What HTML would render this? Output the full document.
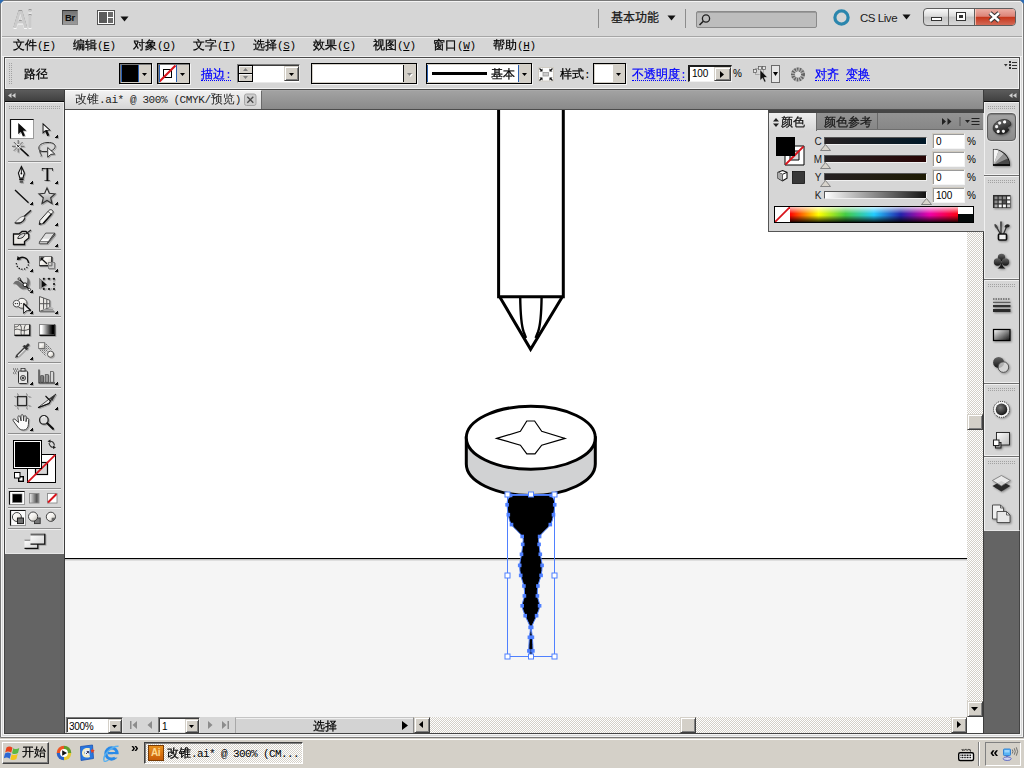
<!DOCTYPE html>
<html lang="zh"><head><meta charset="utf-8"><title>Illustrator</title>
<style>
html,body{margin:0;padding:0}
body{width:1024px;height:768px;overflow:hidden;position:relative;background:#d6d6d6;font-family:"Liberation Sans","WenQuanYi Zen Hei",sans-serif;font-size:12px;color:#000;line-height:14px;-webkit-text-stroke:0.25px}
div,span,svg{position:absolute;box-sizing:border-box}
span.t{white-space:nowrap}
.n{-webkit-text-stroke:0}
.m{position:static;-webkit-text-stroke:0;font-family:"Liberation Mono",monospace;font-size:11px;letter-spacing:-0.4px}
.lnk{color:#0000ff;border-bottom:1px dotted #0000ff}
.sep{left:8px;width:53px;height:2px;border-top:1px solid #8e8e8e;border-bottom:1px solid #f0f0f0}
.rsep{left:984px;width:35px;height:2px;border-top:1px solid #6e6e6e;border-bottom:1px solid #f0f0f0;box-shadow:0 -1px 0 #f0f0f0}
.grip{height:3px;background:repeating-conic-gradient(#a2a2a2 0 25%,transparent 0 100%) 0 0/2px 2px}
.xpbtn{background:#d4d0c8;border:1px solid;border-color:#d4d0c8 #404040 #404040 #d4d0c8;box-shadow:inset 1px 1px 0 #fff,inset -1px -1px 0 #808080}
.xpbtn2{background:#d4d0c8;border:1px solid;border-color:#fff #404040 #404040 #fff;box-shadow:inset -1px -1px 0 #808080}
.fld{background:#fff;border:1px solid;border-color:#7a7a7a #e8e8e8 #e8e8e8 #7a7a7a;box-shadow:inset 1px 1px 0 #3c3c3c}
</style></head><body>
<!-- WINDOW FRAME -->
<div id="frame" style="left:0;top:0;width:1024px;height:738px;background:#d7d7d7"></div>
<!-- APPBAR -->
<div id="appbar" style="left:0;top:0;width:1024px;height:37px;background:#d6d6d6;border-bottom:1px solid #a6a6a6">
<span class="t n" style="left:13px;top:6px;font:bold 23px/28px 'Liberation Sans',sans-serif;color:#cbcbcb;text-shadow:0 1px 0 #f8f8f8,0 -1px 0 #9a9a9a;letter-spacing:-0.5px;transform:scaleX(.88);transform-origin:0 0">Ai</span>
<div style="left:62px;top:10px;width:16px;height:15px;background:linear-gradient(#747474,#9a9a9a);border:1px solid #8a8a8a;border-top-color:#2e2e2e;border-left-color:#4a4a4a"></div>
<span class="t n" style="left:65px;top:12px;font:bold 9.500px/12px 'Liberation Sans',sans-serif;color:#0c0c0c;letter-spacing:-0.3px">Br</span>
<svg style="left:97px;top:10px" width="18" height="15" viewBox="0 0 18 15"><rect x="0.5" y="0.5" width="17" height="14" fill="#fff" stroke="#555"/><rect x="2" y="2" width="8" height="11" fill="#5a5a5a"/><rect x="11" y="2" width="5" height="5" fill="#6a6a6a"/><rect x="11" y="8" width="5" height="5" fill="#6a6a6a"/></svg>
<svg style="left:120px;top:16px" width="9" height="6"><path d="M0.5 0.5h8l-4 5z" fill="#111"/></svg>
<div style="left:598px;top:9px;width:1px;height:19px;background:#8c8c8c"></div>
<span class="t" style="left:611px;top:11px;font:12px/15px 'Liberation Sans','Noto Sans CJK SC',sans-serif;color:#1a1a1a">基本功能</span>
<svg style="left:667px;top:15px" width="9" height="6"><path d="M0.5 0.5h8l-4 5z" fill="#111"/></svg>
<div style="left:685px;top:9px;width:1px;height:19px;background:#8c8c8c"></div>
<div style="left:696px;top:11px;width:121px;height:17px;background:#bdbdbd;border:1px solid #8a8a8a;border-radius:2px;box-shadow:inset 0 1px 0 #9a9a9a"></div>
<svg style="left:698px;top:13px" width="14" height="14" viewBox="0 0 14 14"><circle cx="8" cy="5.5" r="3.6" fill="none" stroke="#222" stroke-width="1.3"/><path d="M5.3 8.2L1.5 12" stroke="#222" stroke-width="1.6"/></svg>
<svg style="left:832px;top:8px" width="19" height="19" viewBox="0 0 19 19"><circle cx="9.5" cy="9.5" r="6.6" fill="none" stroke="#2b86ad" stroke-width="3.2"/></svg>
<span class="t n" style="left:860px;top:11px;font:11.500px/15px 'Liberation Sans',sans-serif;color:#1a1a1a;letter-spacing:-0.45px">CS Live</span>
<svg style="left:902px;top:14px" width="9" height="6"><path d="M0.5 0.5h8l-4 5z" fill="#111"/></svg>
<div style="left:923px;top:8px;width:93px;height:18px;border:1px solid #5e5e5e;border-radius:4px;background:linear-gradient(#fafafa,#dcdcdc 45%,#c4c4c4 50%,#d8d8d8);overflow:hidden">
<div style="left:50px;top:-1px;width:43px;height:18px;background:linear-gradient(#eeb4aa,#dd8478 46%,#c6371c 52%,#d4705e);border-left:1px solid #5e5e5e;box-shadow:inset 0 0 0 1px rgba(255,220,205,.7)"></div>
<div style="left:24px;top:-1px;width:1px;height:18px;background:#6a6a6a"></div>
<svg style="left:0;top:-1px" width="93" height="18" viewBox="0 0 93 18"><rect x="7.5" y="9.5" width="10" height="3" fill="#fff" stroke="#333"/><rect x="32.5" y="4.500" width="9" height="8" fill="#fff" stroke="#333"/><rect x="35" y="7" width="4" height="3" fill="#333"/><path d="M66 5l9 8M75 5l-9 8" stroke="#333" stroke-width="4.4"/><path d="M66 5l9 8M75 5l-9 8" stroke="#fff" stroke-width="2.4"/></svg>
</div>
</div>
<!-- MENUBAR -->
<div id="menubar" style="left:0;top:37px;width:1024px;height:20px;background:#d6d6d6;border-top:1px solid #ececec;border-bottom:1px solid #f0f0f0">
<span class="t" style="left:13px;top:0px">文件<span class="m">(<u>F</u>)</span></span>
<span class="t" style="left:73px;top:0px">编辑<span class="m">(<u>E</u>)</span></span>
<span class="t" style="left:133px;top:0px">对象<span class="m">(<u>O</u>)</span></span>
<span class="t" style="left:193px;top:0px">文字<span class="m">(<u>T</u>)</span></span>
<span class="t" style="left:253px;top:0px">选择<span class="m">(<u>S</u>)</span></span>
<span class="t" style="left:313px;top:0px">效果<span class="m">(<u>C</u>)</span></span>
<span class="t" style="left:373px;top:0px">视图<span class="m">(<u>V</u>)</span></span>
<span class="t" style="left:433px;top:0px">窗口<span class="m">(<u>W</u>)</span></span>
<span class="t" style="left:493px;top:0px">帮助<span class="m">(<u>H</u>)</span></span>
</div>
<!-- CONTROLBAR -->
<div id="ctrlbar" style="left:4px;top:57px;width:1016px;height:33px;background:#d6d6d6;border:1px solid #4a4a4a;box-shadow:inset 0 0 0 1px #f0f0f0"></div>
<div id="ctrl" style="left:0;top:0;width:0;height:0">
<div class="grip" style="left:8px;top:63px;width:4px;height:21px"></div>
<span class="t" style="left:24px;top:67px">路径</span>
<!-- fill dd -->
<div style="left:119px;top:63px;width:33px;height:21px;background:#d4d0c8;border:1px solid #000;box-shadow:inset 1px 1px 0 #7a7a7a,1px 1px 0 #f4f4f4"></div>
<div style="left:121px;top:65px;width:18px;height:17px;background:#000;border-left:1px solid #2a5fb0;border-right:1px solid #2a5fb0"></div>
<svg style="left:142px;top:73px" width="5" height="3"><path d="M0 0h5l-2.500 3z" fill="#000"/></svg>
<!-- stroke dd -->
<div style="left:157px;top:63px;width:33px;height:21px;background:#d4d0c8;border:1px solid #000;box-shadow:inset 1px 1px 0 #7a7a7a,1px 1px 0 #f4f4f4"></div>
<svg style="left:159px;top:65px" width="18" height="17" viewBox="0 0 18 17"><rect width="18" height="17" fill="#fff"/><rect x="4.500" y="4.500" width="8" height="8" fill="none" stroke="#000" stroke-width="1"/><path d="M.5 16.500L16.500 .5" stroke="#d8141c" stroke-width="2.100"/><path d="M.5 0v17M17.500 0v17" stroke="#2a5fb0"/></svg>
<svg style="left:180px;top:73px" width="5" height="3"><path d="M0 0h5l-2.500 3z" fill="#000"/></svg>
<span class="t lnk" style="left:201px;top:67px;height:14px">描边<span class="m">:</span></span>
<!-- stepper -->
<div class="fld" style="left:237px;top:64px;width:63px;height:19px"></div>
<div style="left:238px;top:65px;width:15px;height:9px;background:#d4d0c8;border:1px solid #000;box-shadow:inset 1px 1px 0 #f4f4f4"></div>
<div style="left:238px;top:73px;width:15px;height:9px;background:#d4d0c8;border:1px solid #000;box-shadow:inset 1px 1px 0 #f4f4f4"></div>
<svg style="left:243px;top:68px" width="5" height="11"><path d="M0 3h5l-2.500-3zM0 8h5l-2.500 3z" fill="#808080"/></svg>
<div class="xpbtn" style="left:284px;top:66px;width:15px;height:15px"></div>
<svg style="left:289px;top:73px" width="5" height="3"><path d="M0 0h5l-2.500 3z" fill="#000"/></svg>
<!-- big dd -->
<div style="left:311px;top:63px;width:106px;height:21px;background:#fff;border:1px solid #000;box-shadow:inset 0 0 0 1px #d4d0c8,1px 1px 0 #f4f4f4"></div>
<div style="left:403px;top:65px;width:13px;height:17px;background:#d4d0c8;border-left:1px solid #111"></div>
<svg style="left:407px;top:73px" width="7" height="5"><path d="M1 1h5l-2.500 3z" fill="#fff"/><path d="M0 0h5l-2.500 3z" fill="#808080"/></svg>
<!-- stroke style dd -->
<div style="left:426px;top:63px;width:106px;height:21px;background:#fff;border:1px solid #000;box-shadow:inset 0 0 0 1px #d4d0c8,1px 1px 0 #f4f4f4"></div>
<div style="left:432px;top:72px;width:55px;height:3px;background:#000"></div>
<span class="t" style="left:491px;top:67px">基本</span>
<div style="left:518px;top:65px;width:1px;height:17px;background:#2a5fb0"></div><div style="left:427px;top:65px;width:1px;height:17px;background:#2a5fb0"></div>
<div style="left:519px;top:65px;width:12px;height:17px;background:#d4d0c8"></div>
<svg style="left:522px;top:73px" width="5" height="3"><path d="M0 0h5l-2.500 3z" fill="#000"/></svg>
<svg style="left:538px;top:67px" width="16" height="15" viewBox="0 0 16 15"><rect x=".5" y=".5" width="15" height="13.500" fill="#fbfbfb" stroke="#d0ccc4"/><rect x="5" y="5.500" width="5.500" height="3.500" fill="#ccc" stroke="#999" stroke-width=".8"/><g fill="#111"><path d="M4.500 4.500v-3l-3 3zM11.500 4.500v-3l3 3zM4.500 10.500v3l-3-3zM11.500 10.500v3l3-3z"/></g><path d="M1.500 1.500l2 2M14.500 1.500l-2 2M1.500 13.500l2-2M14.500 13.500l-2-2" stroke="#111" stroke-width="1.100"/></svg>
<span class="t" style="left:560px;top:67px">样式<span class="m">:</span></span>
<div style="left:593px;top:63px;width:33px;height:21px;background:#fff;border:1px solid #000;box-shadow:inset 0 0 0 1px #d4d0c8,1px 1px 0 #f4f4f4"></div>
<div style="left:613px;top:65px;width:12px;height:17px;background:#d4d0c8"></div>
<svg style="left:616px;top:73px" width="5" height="3"><path d="M0 0h5l-2.500 3z" fill="#000"/></svg>
<span class="t lnk" style="left:632px;top:67px;height:14px">不透明度<span class="m">:</span></span>
<div style="left:688px;top:65px;width:44px;height:17px;background:#fff;border:2px solid #1e1e1e;border-right:1px solid #f0f0f0;border-bottom:1px solid #f0f0f0"></div>
<span class="t n" style="left:692px;top:67px;font:10px/13px 'Liberation Sans',sans-serif;letter-spacing:-0.2px">100</span>
<div class="xpbtn" style="left:714px;top:67px;width:17px;height:14px"></div>
<svg style="left:720px;top:71px" width="4" height="7"><path d="M0 0v7l4-3.500z" fill="#000"/></svg>
<span class="t n" style="left:733px;top:67px;font:10px/14px 'Liberation Sans',sans-serif">%</span>
<svg style="left:752px;top:65px" width="18" height="18" viewBox="0 0 18 18"><rect x="3.500" y="3.500" width="8" height="6" fill="none" stroke="#666" stroke-width=".8" stroke-dasharray="1 1"/><rect x="1.500" y="4.500" width="3" height="3" fill="#e4e4e4" stroke="#555" stroke-width=".7"/><rect x="6.500" y="1.500" width="3" height="3" fill="#e4e4e4" stroke="#555" stroke-width=".7"/><rect x="10.500" y="1.500" width="3" height="3" fill="#e4e4e4" stroke="#555" stroke-width=".7"/><path d="M8 4.500v11l2.500-2.300 1.900 4 1.700-.8-1.900-3.900h3.400z" fill="#111" stroke="#e8e8e8" stroke-width=".6"/></svg>
<div style="left:771px;top:65px;width:9px;height:18px;background:#e6e6e6;border:1px solid #6a6a6a"></div>
<svg style="left:773px;top:72px" width="5" height="4"><path d="M0 0h5l-2.500 4z" fill="#000"/></svg>
<svg style="left:789px;top:65px" width="18" height="18" viewBox="0 0 18 18"><circle cx="9" cy="9.500" r="4.900" fill="none" stroke="#646464" stroke-width="4.200" stroke-dasharray="1.500 .9"/><circle cx="9" cy="9.500" r="4.900" fill="none" stroke="#a4a4a4" stroke-width="4.200" stroke-dasharray=".9 1.500" stroke-dashoffset=".9"/><circle cx="9" cy="9.500" r="2.900" fill="#dedede"/></svg>
<span class="t lnk" style="left:815px;top:67px;height:14px">对齐</span>
<span class="t lnk" style="left:846px;top:67px;height:14px">变换</span>
<svg style="left:1004px;top:61px" width="14" height="8" viewBox="0 0 14 8"><path d="M0 3h3.600l-1.800 2.600z" fill="#333"/><path d="M5 0h2v2h-2zM5 3h2v2h-2zM5 6h2v2h-2zM8 1h5v1h-5zM8 4h5v1h-5zM8 7h5v1h-5z" fill="#333"/></svg>
</div>
<!-- DOC AREA -->
<div id="doc" style="left:4px;top:90px;width:1016px;height:644px;background:#646464;border:1px solid #444;border-top:none"></div>
<div style="left:3px;top:57px;width:1018px;height:678px;border:1px solid #f4f4f4;border-top:none"></div>
<div id="tabbar" style="left:65px;top:90px;width:919px;height:20px;background:linear-gradient(#a2a2a2,#8a8a8a);border-top:1px solid #a8a8a8;border-bottom:1px solid #4c4c4c"></div>
<div id="tab" style="left:65px;top:90px;width:197px;height:19px;background:linear-gradient(#f2f2f2,#d6d6d6);border-right:1px solid #6a6a6a;border-top:1px solid #fcfcfc"></div>
<span class="t n" style="left:75px;top:92px;color:#1e1e1e">改锥<span class="m">.ai* @ 300% (CMYK/</span>预览<span class="m">)</span></span>
<svg style="left:244px;top:93px" width="13" height="13" viewBox="0 0 13 13"><rect x=".5" y="1" width="11.500" height="11.500" rx="2" fill="#cecece" stroke="#a6a6a6"/><path d="M3.300 3.800l6 6M9.300 3.800l-6 6" stroke="#4a4a4a" stroke-width="1.300"/></svg>
<svg id="art" style="left:65px;top:110px" width="902" height="607" viewBox="65 110 902 607">
<rect x="65" y="110" width="902" height="448" fill="#fff"/>
<rect x="65" y="558" width="902" height="159" fill="#f5f5f5"/>
<rect x="65" y="558" width="902" height="1" fill="#000"/><rect x="65" y="559" width="902" height="1" fill="#c2c2c2"/><rect x="65" y="560" width="902" height="1" fill="#dedede"/>
<g fill="none" stroke="#000" stroke-width="3" stroke-linejoin="miter" stroke-miterlimit="10">
<path d="M498.600 108V296.700H563.300V108"/>
<path d="M499.800 297L530.600 349.300L562.200 297"/>
<path d="M520.200 297C520.400 312 521.200 325 523.700 332L526 338M541.600 297C541.400 312 540.600 325 538 332L535.600 338" stroke-width="2.400"/>
</g>
<path d="M466.300 437.750V464A64.500 31.450 0 0 0 595.300 464V437.750Z" fill="#d1d2d3" stroke="#000" stroke-width="3"/>
<ellipse cx="530.800" cy="437.750" rx="64.500" ry="31.450" fill="#fff" stroke="#000" stroke-width="3"/>
<path d="M496.700 438.400L520.400 431.300L526.800 421H534.600L541.700 431.300L565 438.400L541.700 445.200L535 453.800H526.800L520.400 445.200Z" fill="#fff" stroke="#000" stroke-width="1.200"/>
<path d="M510.6 495.4C510.1 496.1 508.5 497.9 507.9 499.5C507.3 501.1 507.0 502.3 507.1 504.8C507.2 507.3 507.6 511.4 508.3 514.7C509.0 518.0 509.2 521.0 511.5 524.6C513.8 528.2 520.3 533.2 522.2 536.5C524.1 539.8 522.8 541.4 522.7 544.4C522.6 547.4 522.0 550.8 521.5 554.3C521.0 557.8 519.8 561.9 519.7 565.4C519.6 568.9 520.0 572.0 520.7 575.4C521.4 578.8 523.3 582.6 523.9 586.0C524.5 589.4 524.7 592.6 524.4 595.9C524.1 599.2 522.1 602.5 522.2 605.8C522.3 609.1 523.9 612.1 525.2 615.7C526.5 619.3 529.4 623.8 530.1 627.4C530.8 631.0 529.6 633.4 529.4 637.3C529.2 641.2 528.6 647.7 528.9 650.9C529.1 654.1 530.6 655.4 530.9 656.3L530.9 656.3C531.2 655.4 532.6 654.1 532.9 650.9C533.1 647.7 532.6 641.2 532.4 637.3C532.2 633.4 531.0 631.0 531.7 627.4C532.4 623.8 535.3 619.3 536.6 615.7C537.9 612.1 539.5 609.1 539.6 605.8C539.7 602.5 537.7 599.2 537.4 595.9C537.1 592.6 537.3 589.4 537.9 586.0C538.5 582.6 540.4 578.8 541.1 575.4C541.8 572.0 542.2 568.9 542.1 565.4C542.0 561.9 540.8 557.8 540.3 554.3C539.8 550.8 539.2 547.4 539.1 544.4C539.0 541.4 537.7 539.8 539.6 536.5C541.5 533.2 548.0 528.2 550.3 524.6C552.6 521.0 552.8 518.0 553.5 514.7C554.2 511.4 554.6 507.3 554.7 504.8C554.8 502.3 554.5 501.1 553.9 499.5C553.3 497.9 551.6 496.1 551.2 495.4Z" fill="#000" stroke="#4f80ff" stroke-width="1"/>
<g fill="#4f80ff"><rect x="508.8" y="493.6" width="3.600" height="3.600"/><rect x="549.4" y="493.6" width="3.600" height="3.600"/><rect x="505.3" y="503.0" width="3.600" height="3.600"/><rect x="552.9" y="503.0" width="3.600" height="3.600"/><rect x="506.5" y="512.9" width="3.600" height="3.600"/><rect x="551.7" y="512.9" width="3.600" height="3.600"/><rect x="509.7" y="522.8" width="3.600" height="3.600"/><rect x="548.5" y="522.8" width="3.600" height="3.600"/><rect x="520.4" y="534.7" width="3.600" height="3.600"/><rect x="537.8" y="534.7" width="3.600" height="3.600"/><rect x="520.9" y="542.6" width="3.600" height="3.600"/><rect x="537.3" y="542.6" width="3.600" height="3.600"/><rect x="519.7" y="552.5" width="3.600" height="3.600"/><rect x="538.5" y="552.5" width="3.600" height="3.600"/><rect x="517.9" y="563.6" width="3.600" height="3.600"/><rect x="540.3" y="563.6" width="3.600" height="3.600"/><rect x="518.9" y="573.6" width="3.600" height="3.600"/><rect x="539.3" y="573.6" width="3.600" height="3.600"/><rect x="522.1" y="584.2" width="3.600" height="3.600"/><rect x="536.1" y="584.2" width="3.600" height="3.600"/><rect x="522.6" y="594.1" width="3.600" height="3.600"/><rect x="535.6" y="594.1" width="3.600" height="3.600"/><rect x="520.4" y="604.0" width="3.600" height="3.600"/><rect x="537.8" y="604.0" width="3.600" height="3.600"/><rect x="523.4" y="613.9" width="3.600" height="3.600"/><rect x="534.8" y="613.9" width="3.600" height="3.600"/><rect x="528.3" y="625.6" width="3.600" height="3.600"/><rect x="529.9" y="625.6" width="3.600" height="3.600"/><rect x="527.6" y="635.5" width="3.600" height="3.600"/><rect x="530.6" y="635.5" width="3.600" height="3.600"/><rect x="527.1" y="649.1" width="3.600" height="3.600"/><rect x="531.1" y="649.1" width="3.600" height="3.600"/><rect x="529.1" y="654.5" width="3.600" height="3.600"/></g>
<rect x="507.500" y="494.500" width="47" height="162" fill="none" stroke="#4f80ff" stroke-width="1"/>
<g fill="#fff" stroke="#4f80ff" stroke-width="1"><rect x="505.0" y="492.0" width="5" height="5"/><rect x="505.0" y="573.0" width="5" height="5"/><rect x="505.0" y="654.0" width="5" height="5"/><rect x="528.5" y="492.0" width="5" height="5"/><rect x="528.5" y="654.0" width="5" height="5"/><rect x="552.0" y="492.0" width="5" height="5"/><rect x="552.0" y="573.0" width="5" height="5"/><rect x="552.0" y="654.0" width="5" height="5"/></g>
</svg>
<!-- SCROLLBARS/STATUS -->
<div id="vscroll" style="left:967px;top:110px;width:16px;height:607px;background:repeating-conic-gradient(#fff 0 25%,#d4d0c8 0 50%) 0 0/2px 2px"></div>
<div class="xpbtn" style="left:967px;top:414px;width:16px;height:16px"></div>
<div class="xpbtn" style="left:967px;top:701px;width:16px;height:16px"></div>
<svg style="left:971px;top:707px" width="7" height="4"><path d="M0 0h7l-3.500 4z" fill="#000"/></svg>
<div id="statusbar" style="left:65px;top:717px;width:919px;height:16px;background:#d6d6d6"></div>
<div id="hscroll" style="left:414px;top:717px;width:553px;height:16px;background:repeating-conic-gradient(#fff 0 25%,#d4d0c8 0 50%) 0 0/2px 2px"></div>
<div style="left:967px;top:717px;width:16px;height:16px;background:#fff"></div>
<div class="fld" style="left:66px;top:717px;width:57px;height:16px"></div>
<span class="t n" style="left:69px;top:720px;font:10px/14px 'Liberation Sans',sans-serif;letter-spacing:-0.3px">300%</span>
<div class="xpbtn" style="left:108px;top:719px;width:14px;height:14px"></div>
<svg style="left:112px;top:725px" width="5" height="3"><path d="M0 0h5l-2.500 3z" fill="#000"/></svg>
<svg style="left:128px;top:720px" width="110" height="11" viewBox="0 0 110 11"><g fill="#8c8c8c"><rect x="2" y="1" width="1.500" height="8"/><path d="M9 1v8l-4.500-4z"/><path d="M24 1v8l-4.500-4z"/><path d="M80 1v8l4.500-4z"/><path d="M94 1v8l4.500-4z"/><rect x="99.500" y="1" width="1.500" height="8"/></g></svg>
<div class="fld" style="left:158px;top:717px;width:42px;height:16px"></div>
<span class="t n" style="left:162px;top:720px;font:10px/14px 'Liberation Sans',sans-serif">1</span>
<div class="xpbtn" style="left:185px;top:719px;width:14px;height:14px"></div>
<svg style="left:189px;top:725px" width="5" height="3"><path d="M0 0h5l-2.500 3z" fill="#000"/></svg>
<div style="left:235px;top:717px;width:179px;height:16px;background:#d3d3d3;border-top:1px solid #c4c4c4;border-left:1px solid #a8a8a8;border-right:1px solid #8a8a8a;box-shadow:inset 0 1px 0 #f0f0f0"></div>
<span class="t" style="left:313px;top:719px">选择</span>
<svg style="left:402px;top:721px" width="6" height="9"><path d="M0 0v9l6-4.500z" fill="#000"/></svg>
<div class="xpbtn" style="left:414px;top:717px;width:16px;height:16px"></div>
<svg style="left:419px;top:721px" width="4" height="7"><path d="M4 0v7l-4-3.500z" fill="#000"/></svg>
<div class="xpbtn" style="left:680px;top:717px;width:16px;height:16px"></div>
<div class="xpbtn" style="left:951px;top:717px;width:16px;height:16px"></div>
<svg style="left:957px;top:721px" width="4" height="7"><path d="M0 0v7l4-3.500z" fill="#000"/></svg>
<!-- TOOLS -->
<div id="tools" style="left:5px;top:90px;width:59px;height:464px;background:#d6d6d6;border-right:1px solid #e8e8e8;border-bottom:1px solid #e8e8e8;border-left:1px solid #f0f0f0"></div>
<div style="left:5px;top:102px;width:59px;height:1px;background:#f0f0f0"></div>
<div style="left:64px;top:90px;width:1px;height:644px;background:#3c3c3c"></div>
<div style="left:5px;top:90px;width:59px;height:12px;background:linear-gradient(#5c5c5c,#404040);border-bottom:1px solid #0c0c0c"></div>
<svg style="left:8px;top:93px" width="8" height="5"><path d="M3.500 0v5l-3.500-2.500zM7.500 0v5l-3.500-2.500z" fill="#d0d0d0"/></svg>
<div class="grip" style="left:8px;top:106px;width:53px"></div>
<div class="sep" style="top:161px"></div><div class="sep" style="top:249px"></div><div class="sep" style="top:316px"></div><div class="sep" style="top:362px"></div><div class="sep" style="top:387px"></div><div class="sep" style="top:433px"></div><div class="sep" style="top:488px"></div><div class="sep" style="top:507px"></div><div class="sep" style="top:528px"></div>
<svg id="toolicons" style="left:0;top:110px" width="66" height="446" viewBox="0 110 66 446"><defs><linearGradient id="gm" x1="0" y1="0" x2="0" y2="1"><stop offset="0" stop-color="#fafafa"/><stop offset="1" stop-color="#9a9a9a"/></linearGradient>
<linearGradient id="gh" x1="0" y1="0" x2="1" y2="0"><stop offset="0" stop-color="#fff"/><stop offset="1" stop-color="#000"/></linearGradient>
<linearGradient id="gm2" x1="0" y1="0" x2="1" y2="1"><stop offset="0" stop-color="#fff"/><stop offset="1" stop-color="#d4d4d4"/></linearGradient>
<linearGradient id="gb" x1="0" y1="0" x2="1" y2="0"><stop offset="0" stop-color="#f0f0f0"/><stop offset=".75" stop-color="#555"/><stop offset="1" stop-color="#888"/></linearGradient>
<linearGradient id="gh2" x1="0" y1="0" x2="1" y2="0"><stop offset=".15" stop-color="#fff"/><stop offset=".85" stop-color="#000"/></linearGradient>
<linearGradient id="gd" x1="0" y1="0" x2="1" y2="1"><stop offset="0" stop-color="#fff"/><stop offset=".5" stop-color="#f4f2ee"/><stop offset="1" stop-color="#b8b4ac"/></linearGradient>
<filter id="sh" x="-20%" y="-20%" width="150%" height="150%"><feGaussianBlur in="SourceAlpha" stdDeviation=".6"/><feOffset dx=".8" dy="1"/><feComponentTransfer><feFuncA type="linear" slope=".22"/></feComponentTransfer><feMerge><feMergeNode/><feMergeNode in="SourceGraphic"/></feMerge></filter></defs>
<rect x="10.500" y="119.500" width="23" height="19" fill="#fff" stroke="#9a9a9a"/><path d="M10.500 138.500v-19h23" fill="none" stroke="#111" stroke-width="1.200"/>
<g filter="url(#sh)">
<path d="M18.200 123v11.200l2.600-2.500 2.100 4.700 2.100-1-2.100-4.600h3.600z" fill="#111"/>
<path d="M42.600 122.800v11.200l2.600-2.500 2.100 4.700 2.100-1-2.100-4.600h3.600z" fill="#111"/><path d="M43.500 125v6.800l1.700-1.600 1.300-.1h2.500z" fill="#f2f2f2"/>
<path d="M57 135h1v1h-1zM56 136h2v1h-2zM55 137h3v1h-3z" fill="#0a0a0a"/>
<path d="M18.200 140v12.500M12 146.300h12.500M13.800 142l8.800 8.800M22.600 142l-8.800 8.800" stroke="#555" stroke-width=".9"/><circle cx="18.200" cy="146.300" r="2.300" fill="#f4f4f4"/><path d="M17 145l2.500 2.500M19.500 145l-2.500 2.500" stroke="#111" stroke-width=".9"/><path d="M20.500 148.500l8 7.500" stroke="#111" stroke-width="1.700"/>
<path d="M40 151c-3-4 0-8 7-8.500s10 3 7 6.500c-1 1-2 1.500-3 1.500M40 151c0 2 2 1 1.500 0s-2-.5-1.500 1.500 2 2 1 4" fill="none" stroke="#333" stroke-width="1"/><path d="M42 151.500h5" stroke="#333"/><path d="M47.700 147.500l7 6.500-4 .4-3 2.800z" fill="#f4f4f4" stroke="#222" stroke-width=".9"/>
</g>
<g filter="url(#sh)">
<path d="M21.400 166.500l3 6.500-1.400 5h-3.200l-1.400-5z" fill="#f4f4f4" stroke="#111" stroke-width="1.100"/><path d="M21.400 167v6" stroke="#111" stroke-width=".9"/><circle cx="21.400" cy="173.500" r=".9" fill="#111"/><rect x="19.200" y="178.500" width="4.400" height="1.600" fill="#111"/><rect x="19.700" y="180.500" width="3.400" height="2.300" fill="#555"/>
<path d="M32 181h1v1h-1zM31 182h2v1h-2zM30 183h3v1h-3z" fill="#0a0a0a"/>
<text x="47.300" y="181" text-anchor="middle" font-family="Liberation Serif,serif" font-size="19" fill="#111">T</text>
<path d="M57 181h1v1h-1zM56 182h2v1h-2zM55 183h3v1h-3z" fill="#0a0a0a"/>
<path d="M15 190l13.500 12.700" stroke="#111" stroke-width="1.300"/><path d="M32 202h1v1h-1zM31 203h2v1h-2zM30 204h3v1h-3z" fill="#0a0a0a"/>
<path d="M47 188l2.300 5.300 5.700.600-4.300 3.900 1.300 5.700-5-3-5 3 1.300-5.700-4.300-3.900 5.700-.6z" fill="url(#gm)" stroke="#333" stroke-width="1.200"/><path d="M57 202h1v1h-1zM56 203h2v1h-2zM55 204h3v1h-3z" fill="#0a0a0a"/>
<path d="M30.300 209.600L23.400 215.900" stroke="#e4e4e4" stroke-width="1.200"/><path d="M31 210.300L24 216.600" stroke="#222" stroke-width="1.500"/><path d="M24.300 216.200C20.500 216.300 18 219.300 14.800 222.800C19.500 223.800 23.500 222 24.800 218.200Z" fill="#ececec" stroke="#444" stroke-width=".7"/><path d="M14.800 222.800C19.500 223.800 23.500 222 24.800 218.200" fill="none" stroke="#222" stroke-width="1.300"/>
<path d="M39.200 224.600L39.900 220.500L48.500 210.800C50 209 52.500 209.500 53 211.500C53.200 212.500 52.500 213 51.800 213.700L43.200 223.500Z" fill="#f2f2f0" stroke="#222" stroke-width=".9"/><path d="M43.200 223.500L51.800 213.700" stroke="#111" stroke-width="1.500"/><path d="M39.200 224.600l.4-2.300 1.700 1.500z" fill="#111"/><path d="M48 211.400l3.300 2.900" stroke="#555" stroke-width=".9"/><path d="M57 223h1v1h-1zM56 224h2v1h-2zM55 225h3v1h-3z" fill="#0a0a0a"/>
<path d="M13.500 234h5.500l3-2.500h4l2.800 3v3.500l-4.300 3.500v3h-11z" fill="#ebe9e5" stroke="#111" stroke-width="1.300"/><path d="M31 230l-5.500 4" stroke="#222" stroke-width="1.300"/><path d="M17.800 238.500c0-2.500 4-5.500 7-5 .5 2.500-3 5.500-7 5z" fill="#d8d8d8" stroke="#222" stroke-width="1"/>
<path d="M45.700 233.100h9.100l-6.600 8.700h-8.700z" fill="#dedede" stroke="#333" stroke-width=".8"/><path d="M43 238.800h7.400l-2.200 3h-8.700z" fill="#fbfbfb"/><path d="M39.500 241.800h8.700l-.8 1.900h-8.200z" fill="#f4f4f4" stroke="#333" stroke-width=".8"/><path d="M54.800 233.100v1.900l-7.400 8.700.8-1.900z" fill="#999" stroke="#333" stroke-width=".8"/><path d="M57 244h1v1h-1zM56 245h2v1h-2zM55 246h3v1h-3z" fill="#0a0a0a"/>
</g>
<g filter="url(#sh)">
<g fill="#111"><circle cx="28.5" cy="262.4" r=".75"/><circle cx="28.3" cy="265.1" r=".75"/><circle cx="26.9" cy="267.4" r=".75"/><circle cx="24.6" cy="268.9" r=".75"/><circle cx="21.9" cy="269.3" r=".75"/><circle cx="19.3" cy="268.4" r=".75"/><circle cx="17.3" cy="266.4" r=".75"/><circle cx="16.4" cy="263.8" r=".75"/></g><path d="M18.300 259A6.100 6.100 0 0 1 28.500 262.300" fill="none" stroke="#111" stroke-width="1.300"/><path d="M16.800 260.300l.8-4.300 3.400 3.200z" fill="#111"/><path d="M32 269h1v1h-1zM31 270h2v1h-2zM30 271h3v1h-3z" fill="#0a0a0a"/>
<rect x="39.500" y="256.500" width="12" height="9" fill="url(#gd)" stroke="#6e6e6e" stroke-width="1"/><path d="M39.500 265.800h12.500v-9" fill="none" stroke="#111" stroke-width="1"/><rect x="48.500" y="262.500" width="6" height="6" fill="#d6d6d6" fill-opacity=".5" stroke="#858585" stroke-width="1"/><path d="M47 263.700l-5.500-5" stroke="#111" stroke-width="1.200"/><path d="M40.300 257.300h4.300l-4.300 4.100z" fill="#111"/><path d="M57 269h1v1h-1zM56 270h2v1h-2zM55 271h3v1h-3z" fill="#0a0a0a"/>
<path d="M13 284.500c1-4 4.500-5 7-2.500s4.500 3.500 6.200 1.500 1.300-4.500.3-6.300c3.500 1 4.200 5.500 2.500 8.800s-6.500 4.700-9.500 1.500-4.500-5-6.500-3z" fill="#6e6e6e"/><path d="M19.200 279l10.100 10.500" stroke="#111" stroke-width="1.100"/><circle cx="19.200" cy="279" r="1.200" fill="#fff" stroke="#111" stroke-width=".8"/><circle cx="25" cy="284.800" r="1.900" fill="#fff" stroke="#111" stroke-width=".9"/><circle cx="29.300" cy="289.500" r="1.200" fill="#fff" stroke="#111" stroke-width=".8"/><path d="M32 290h1v1h-1zM31 291h2v1h-2zM30 292h3v1h-3z" fill="#0a0a0a"/>
<rect x="43.800" y="278.800" width="10.200" height="10.200" fill="none" stroke="#555" stroke-width=".7" stroke-dasharray=".8 .8"/><g fill="#111"><rect x="42.9" y="277.9" width="1.800" height="1.800"/><rect x="42.9" y="288.1" width="1.800" height="1.800"/><rect x="48.1" y="277.9" width="1.800" height="1.800"/><rect x="48.1" y="288.1" width="1.800" height="1.800"/><rect x="53.1" y="277.9" width="1.800" height="1.800"/><rect x="53.1" y="283.1" width="1.800" height="1.800"/><rect x="53.1" y="288.1" width="1.800" height="1.800"/></g><path d="M39.200 278v10.700l7.600-3.900z" fill="#111"/><path d="M39.200 278v10.700l2.500-1.300v-6.900z" fill="#9a9a9a"/>
<circle cx="22" cy="303.300" r="5" fill="url(#gd)" stroke="#555" stroke-width="1"/><circle cx="16.500" cy="303.600" r="3.300" fill="#f4f4f4" stroke="#555" stroke-width="1"/><path d="M17.500 300.700a3.300 3.300 0 0 1 0 5.800" fill="#ececec" stroke="none"/><g fill="#222"><circle cx="15.400" cy="303.600" r=".7"/><circle cx="17.400" cy="303.600" r=".7"/><circle cx="19.700" cy="303.600" r=".5"/><circle cx="21.300" cy="303.600" r=".5"/></g><path d="M23.600 303.600v9.800l2.400-2.300 1.300-.5h3.400z" fill="#f0f0f0" stroke="#111" stroke-width=".9" stroke-linejoin="round"/><path d="M23.600 303.600l7.100 7" stroke="#111" stroke-width="1.400"/><path d="M32 311h1v1h-1zM31 312h2v1h-2zM30 313h3v1h-3z" fill="#0a0a0a"/>
<path d="M39.500 296.500l10.300 3.800v7.100l-10.300 4.100z" fill="#eceae6" stroke="#555" stroke-width="1"/><path d="M43.600 298v12M46.800 299.200v9.500M39.500 303.700h10.300" stroke="#555" stroke-width="1"/><path d="M39.500 311.500h15" stroke="#777" stroke-width="1"/><path d="M43 309.500h10" stroke="#999" stroke-width="1"/><path d="M46.500 307.700h6" stroke="#b4b4b4" stroke-width="1"/><path d="M57 311h1v1h-1zM56 312h2v1h-2zM55 313h3v1h-3z" fill="#0a0a0a"/>
</g>
<g filter="url(#sh)">
<rect x="14.500" y="324.500" width="15" height="10.500" fill="#eceae6" stroke="#888" stroke-width="1"/><path d="M14.500 335.300h15.300v-10.800" fill="none" stroke="#111" stroke-width="1.200"/><path d="M14.500 330c4-3 6 3 15-1M20 324.500c3 4 0 7 1.500 10.500M26 324.500c-3 3-1 7-2 10.500M14.500 327c3 0 4-1 5-2.500" fill="none" stroke="#444" stroke-width=".9"/>
<rect x="39.500" y="324.500" width="15" height="10.500" fill="url(#gh2)" stroke="#888" stroke-width="1"/><path d="M39.500 335.300h15.300v-10.800" fill="none" stroke="#111" stroke-width="1.200"/>
<path d="M28 343.500l1.500 1.500-2.500 2.500 1 1-1.500 1.500-1-1-7.500 7.500-2.500 1 1-2.500 7.500-7.500-1-1 1.500-1.500 1 1z" fill="#333" stroke="#222" stroke-width=".5"/><path d="M17.500 355.500l7-7 1 1-7 7z" fill="#e8e8e8"/><path d="M32 357h1v1h-1zM31 358h2v1h-2zM30 359h3v1h-3z" fill="#0a0a0a"/>
<rect x="38.700" y="342.700" width="6" height="5.800" fill="url(#gd)" stroke="#666" stroke-width=".9"/><circle cx="50.600" cy="354.200" r="3.100" fill="url(#gd)" stroke="#444" stroke-width=".9"/><path d="M46 344.500h1M46 346.500h3M46 348.500h5M40 350.500h7M42 352.500h3M44 354.500h1" stroke="#777" stroke-width="1" stroke-dasharray="1 1"/>
</g>
<g filter="url(#sh)">
<rect x="18.500" y="371" width="9" height="12.500" rx="1" fill="#e6e6e6" stroke="#333" stroke-width="1"/><rect x="21" y="368.500" width="4" height="2.500" fill="#ddd" stroke="#333" stroke-width=".8"/><circle cx="23" cy="378" r="2.600" fill="#bbb" stroke="#333" stroke-width=".8"/><circle cx="23" cy="378" r="1" fill="#222"/><path d="M13 369h6M14 371h4M13 373h3" stroke="#444" stroke-width="1" stroke-dasharray="1 1"/><path d="M32 382h1v1h-1zM31 383h2v1h-2zM30 384h3v1h-3z" fill="#0a0a0a"/>
<path d="M39 369.500v13.500h16" fill="none" stroke="#222" stroke-width="1.100"/><rect x="40.700" y="375.700" width="2.800" height="6.500" fill="#777" stroke="#333" stroke-width=".6"/><rect x="45.200" y="374.700" width="3.200" height="7.500" fill="#999" stroke="#333" stroke-width=".6"/><rect x="50.300" y="371.700" width="3.200" height="10.500" fill="#d8d8d8" stroke="#333" stroke-width=".6"/><path d="M57 382h1v1h-1zM56 383h2v1h-2zM55 384h3v1h-3z" fill="#0a0a0a"/>
</g>
<g filter="url(#sh)">
<rect x="17.500" y="396.500" width="9" height="9" fill="none" stroke="#2a2a2a" stroke-width="1.200"/><path d="M14 396.500h2.500M28 396.500h2.500M14 405.500h2.500M28 405.500h2.500M17.500 393v2.500M26.500 393v2.500M17.500 406.500v2.500M26.500 406.500v2.500" stroke="#a2a2a2" stroke-width="1"/>
<path d="M56 394l-7.500 5.500-10.500 8.200 11-4.200 2-3.500z" fill="#e8e8e8" stroke="#222" stroke-width=".8"/><path d="M56 394l-6.500 4.700 2.800 2.300z" fill="#333"/><path d="M38 407.700l11-4.200 1-1.800" fill="none" stroke="#111" stroke-width="1.200"/><path d="M45.500 396l5.500 5.500" stroke="#111" stroke-width="1.100"/><path d="M57 407h1v1h-1zM56 408h2v1h-2zM55 409h3v1h-3z" fill="#0a0a0a"/>
<path d="M18.600 422.500l-3.600-3.200c-1.300-1.200-2.800.3-1.700 1.600l4.500 6.200c1.300 2 3.200 2.900 5.700 2.900 3.200 0 4.600-2.300 4.900-5.500l.3-5c.1-1.500-1.900-1.700-2.200-.2l-.5 2.400.2-4.700c.1-1.600-2.100-1.800-2.300-.2l-.3 4.200-.3-5.200c-.1-1.600-2.300-1.600-2.300 0l.1 5.200-1-4.200c-.4-1.600-2.500-1.100-2.200.5z" fill="#fbfbfb" stroke="#333" stroke-width=".9" stroke-linejoin="round"/><path d="M32 428h1v1h-1zM31 429h2v1h-2zM30 430h3v1h-3z" fill="#0a0a0a"/>
<circle cx="43.900" cy="419.900" r="4.300" fill="#e4e4e4" fill-opacity=".8" stroke="#222" stroke-width="1.300"/><path d="M42 417.500a2.800 2.800 0 0 1 3-.8" fill="none" stroke="#fff" stroke-width="1"/><path d="M47.300 423.300l5.700 5.500" stroke="#111" stroke-width="2.100" stroke-linecap="round"/>
</g>
<rect x="13" y="440" width="29" height="29" fill="#000"/><rect x="14.500" y="441.500" width="26" height="26" fill="none" stroke="#fff"/>
<path d="M27 454h29v29h-29zM35.500 462.500v12h12v-12z" fill="#fff" fill-rule="evenodd"/><rect x="27.500" y="454.500" width="28" height="28" fill="none" stroke="#000"/><rect x="35.500" y="462.500" width="12" height="12" fill="none" stroke="#000" stroke-width="1.200"/>
<path d="M27.800 482.200L55.200 454.800" stroke="#d8141c" stroke-width="1.800"/>
<rect x="13" y="440" width="29" height="29" fill="#000"/><rect x="14.500" y="441.500" width="26" height="26" fill="none" stroke="#fff"/>
<path d="M49 441.500c3-1 5 1 5.500 4M54.500 447c-3 1-5-1-5.500-4" fill="none" stroke="#333" stroke-width="1.100"/><path d="M47.500 441.200l3-1.700v3.400zM56 447.500l-3 1.500v-3.400z" fill="#222"/>
<rect x="18.700" y="476.700" width="4.600" height="4.600" fill="#fff" stroke="#000" stroke-width="1.400"/><rect x="14.500" y="472.500" width="5.500" height="5.500" fill="#fff" stroke="#000" stroke-width="1"/>
<rect x="9.500" y="491.500" width="15" height="13" fill="#fff" stroke="#9a9a9a"/><path d="M9.500 504.500v-13h15" fill="none" stroke="#111" stroke-width="1.200"/><rect x="12.500" y="494" width="9.500" height="8.500" fill="#000" stroke="#777" stroke-width=".6"/>
<rect x="29.500" y="493.500" width="9.500" height="9.500" fill="url(#gb)" stroke="#8a8a8a" stroke-width=".9"/>
<rect x="47.500" y="493.500" width="9.500" height="9.500" fill="#fff" stroke="#8a8a8a" stroke-width=".9"/><path d="M48 502.500l8.500-8.500" stroke="#d8141c" stroke-width="2"/>
<rect x="10.500" y="510.500" width="15" height="15" fill="#fcfcfc" stroke="#9a9a9a"/><path d="M10.500 525.500v-15h15" fill="none" stroke="#111" stroke-width="1.200"/>
<g stroke-width=".9"><circle cx="16.900" cy="517" r="4.500" fill="url(#gd)" stroke="#333"/><rect x="17.500" y="518" width="6" height="5.600" fill="#707070" stroke="#111"/>
<rect x="34.500" y="518" width="5.700" height="5.600" fill="#777" stroke="#333"/><circle cx="33.100" cy="516.600" r="4.600" fill="url(#gd)" stroke="#333"/>
<circle cx="50.900" cy="516.800" r="4.600" fill="url(#gd)" stroke="#333"/><path d="M51.700 517.700h3.700a4.600 4.600 0 0 1-3.700 3.600z" fill="#666" stroke="none"/></g>
<g filter="url(#sh)"><rect x="24.500" y="540" width="13" height="8" fill="url(#gm2)"/><path d="M24.500 548.300h13.300v-5" fill="none" stroke="#111" stroke-width="1.200"/><rect x="24.500" y="539.500" width="6" height="1.500" fill="#999"/>
<rect x="30.500" y="533.500" width="14" height="10.500" fill="url(#gm2)"/><rect x="30.500" y="533.500" width="14" height="2" fill="#666"/><path d="M30.500 544.200h14.300v-10.500" fill="none" stroke="#111" stroke-width="1.300"/></g>
</svg>
<!-- RIGHT DOCK -->
<div id="dock" style="left:984px;top:90px;width:36px;height:441px;background:#d6d6d6;border-right:1px solid #444;border-left:1px solid #f0f0f0;border-bottom:1px solid #e8e8e8"></div>
<div style="left:983px;top:90px;width:1px;height:644px;background:#3c3c3c"></div>
<div style="left:984px;top:90px;width:35px;height:12px;background:linear-gradient(#5c5c5c,#404040);border-bottom:1px solid #0c0c0c"></div>
<div style="left:984px;top:102px;width:35px;height:1px;background:#f0f0f0"></div>
<svg style="left:1009px;top:93px" width="8" height="5"><path d="M3.500 0v5l-3.500-2.500zM7.500 0v5l-3.500-2.500z" fill="#d0d0d0"/></svg>
<div class="grip" style="left:987px;top:106px;width:28px"></div><div class="grip" style="left:987px;top:180px;width:28px"></div><div class="grip" style="left:987px;top:284px;width:28px"></div><div class="grip" style="left:987px;top:388px;width:28px"></div><div class="grip" style="left:987px;top:461px;width:28px"></div><div class="rsep" style="top:175px"></div><div class="rsep" style="top:279px"></div><div class="rsep" style="top:383px"></div><div class="rsep" style="top:456px"></div>
<div style="left:987px;top:113px;width:29px;height:28px;border-radius:4px;background:linear-gradient(#a4a4a4,#8c8c8c);border:1px solid #5e5e5e;box-shadow:0 0 0 1px #e6e6e6,inset 0 1px 1px #7a7a7a"></div>
<svg id="dockicons" style="left:984px;top:110px" width="36" height="420" viewBox="984 110 36 420"><defs>
<linearGradient id="dg" x1="0" y1="0" x2="1" y2="1"><stop offset="0" stop-color="#fff"/><stop offset="1" stop-color="#111"/></linearGradient>
<linearGradient id="dk" x1="0" y1="0" x2="0" y2="1"><stop offset="0" stop-color="#666"/><stop offset="1" stop-color="#161616"/></linearGradient>
<radialGradient id="dr" cx=".4" cy=".35" r=".7"><stop offset="0" stop-color="#777"/><stop offset="1" stop-color="#111"/></radialGradient>
<filter id="sh2" x="-20%" y="-20%" width="150%" height="150%"><feGaussianBlur in="SourceAlpha" stdDeviation=".8"/><feOffset dx="1" dy="1"/><feComponentTransfer><feFuncA type="linear" slope=".4"/></feComponentTransfer><feMerge><feMergeNode/><feMergeNode in="SourceGraphic"/></feMerge></filter></defs>
<g filter="url(#sh2)">
<g transform="rotate(-18 1002 127)"><path d="M993 127c0-4 4-7 9.500-7s9 3 9 6-2.500 2.500-3.500 2.500-1.500 1.500-.5 2.500-1.500 3-5 3c-5.500 0-9.500-3-9.500-7z" fill="url(#dk)" stroke="#222" stroke-width=".6"/><circle cx="997" cy="125" r="1.600" fill="#eee"/><circle cx="1001" cy="122.500" r="1.600" fill="#eee"/><circle cx="1006" cy="123" r="1.600" fill="#fff"/><circle cx="997" cy="130" r="1.600" fill="#fff"/><circle cx="1002" cy="131.500" r="1.600" fill="#eee"/></g>
<path d="M993.500 165v-15.500a16 15.500 0 0 1 16 15.500z" fill="#888" stroke="#111" stroke-width="1.100"/><path d="M993.500 165v-15.500a16 15.500 0 0 1 5.200 .9z" fill="#f6f6f6"/><path d="M993.500 165l5.200-14.600a16 15.500 0 0 1 5 3.300z" fill="#c8c8c8"/><path d="M993.500 165l10.200-11.300a16 15.500 0 0 1 4 4.800z" fill="#909090"/><path d="M993.500 165l14.200-6.500a16 15.500 0 0 1 1.800 6.500z" fill="#4a4a4a"/><path d="M993 165h17" stroke="#000" stroke-width="1.600"/>
<rect x="993" y="195" width="17.500" height="13" fill="#2e2e2e"/><g fill="#8a8a8a"><rect x="994.500" y="196.500" width="3" height="2.800"/><rect x="998.700" y="196.500" width="3" height="2.800"/><rect x="1002.900" y="196.500" width="3" height="2.800"/><rect x="994.500" y="200.500" width="3" height="2.800"/><rect x="1002.900" y="200.500" width="3" height="2.800" fill="#555"/><rect x="994.500" y="204.500" width="3" height="2.800" fill="#aaa"/></g><g fill="#f4f4f4"><rect x="1007.100" y="196.500" width="3" height="2.800"/><rect x="1007.100" y="200.500" width="3" height="2.800"/><rect x="998.700" y="204.500" width="3" height="2.800"/><rect x="1002.900" y="204.500" width="3" height="2.800"/><rect x="998.700" y="200.500" width="3" height="2.800" fill="#bbb"/><rect x="1007.100" y="204.500" width="3" height="2.800" fill="#ccc"/></g>
<path d="M1001 222.500v11M996.500 227l4 7M1006.500 227l-3 7" stroke="#333" stroke-width="1.300"/><rect x="1000" y="221.500" width="2.200" height="5" fill="#555"/><path d="M994.500 224c2 0 3.500 2.500 3.500 5-2.500-.5-4-2.500-3.500-5z" fill="#444"/><path d="M1004.500 227c.5-2.500 3-3.500 5-2 .5 1.500-.5 2.500-2 2.500s-2 .5-3-.5z" fill="#222"/><rect x="998.500" y="234" width="8" height="6" rx="1" fill="#f0f0f0" stroke="#111" stroke-width="1.600"/>
<circle cx="1001.500" cy="257.500" r="3.700" fill="url(#dk)"/><circle cx="997.500" cy="262" r="3.700" fill="url(#dk)"/><circle cx="1005.500" cy="262" r="3.700" fill="url(#dk)"/><path d="M1001.500 259c0 5-1 7.500-4 9.500h8c-3-2-4-4.500-4-9.500z" fill="#1a1a1a"/>
<path d="M993 299h17.500" stroke="#333" stroke-width="1" stroke-dasharray="1.500 1"/><path d="M993 302.300h17.500" stroke="#444" stroke-width="1"/><rect x="993" y="305" width="17.500" height="2.200" fill="#333"/><rect x="993" y="309" width="17.500" height="3" fill="#2a2a2a"/>
<rect x="993.500" y="329.500" width="16.500" height="11" fill="url(#dg)" stroke="#000" stroke-width="1.200"/>
<circle cx="998.600" cy="362.400" r="5.500" fill="url(#dk)"/><circle cx="1003.400" cy="367.100" r="5.300" fill="#ddd" fill-opacity=".75" stroke="#444" stroke-width=".9"/>
<circle cx="1001.500" cy="409.400" r="8" fill="#f6f6f6" stroke="#222" stroke-width="1" stroke-dasharray="1 1"/><circle cx="1001.500" cy="409.400" r="5.800" fill="url(#dr)"/>
<rect x="996.500" y="432.500" width="13" height="12.500" fill="url(#dg)" stroke="#222" stroke-width=".9"/><rect x="997" y="433" width="12" height="11.500" fill="#fff" fill-opacity=".72"/><rect x="995.500" y="442.500" width="5.500" height="5.500" fill="#999" stroke="#222" stroke-width="1"/><rect x="993.500" y="440" width="5.500" height="5.500" fill="#fff" stroke="#222" stroke-width="1"/>
<path d="M1001.400 481l9 5-9 5.500-9-5.500z" fill="#2c2c2c"/><path d="M1001.400 475.500l9 5-9 5.500-9-5.500z" fill="#f0f0f0" fill-opacity=".85" stroke="#666" stroke-width=".7"/>
<path d="M992.500 505h8l3 3v11h-11z" fill="#f0f0f0" stroke="#444" stroke-width=".9"/><path d="M997 511.500h9.500l3.500 3.500v7.500h-13z" fill="#e8e8e8" stroke="#444" stroke-width=".9"/><path d="M1006.500 511.500v3.500h3.500M1000.500 505v3h3" fill="none" stroke="#444" stroke-width=".8"/>
</g></svg>
<!-- COLOR PANEL -->
<div id="colorpanel" style="left:768px;top:110px;width:216px;height:122px;background:#d6d6d6;border:1px solid #555;border-right:none;border-top:3px solid #454545"></div>
<div id="cp" style="left:0;top:0;width:0;height:0">
<div style="left:769px;top:113px;width:214px;height:17px;background:linear-gradient(#939393,#878787);border-bottom:1px solid #6e6e6e"></div>
<div style="left:769px;top:113px;width:48px;height:18px;background:linear-gradient(#eee,#d6d6d6);border-right:1px solid #6a6a6a"></div>
<div style="left:877px;top:113px;width:1px;height:16px;background:#6a6a6a"></div>
<svg style="left:773px;top:118px" width="6" height="9"><path d="M3 0l3 3.500h-6zM3 9l3-3.500h-6z" fill="#222"/></svg>
<span class="t" style="left:781px;top:115px;color:#111">颜色</span>
<span class="t" style="left:824px;top:115px;color:#1a1a1a">颜色参考</span>
<svg style="left:942px;top:117px" width="40" height="9" viewBox="0 0 40 9"><path d="M0 1v7l4-3.500zM5.500 1v7l4-3.500z" fill="#222"/><rect x="17.500" y="0" width="1" height="9" fill="#555"/><path d="M23 3h5l-2.500 3z" fill="#222"/><path d="M29.500 1.500h8M29.500 4.500h8M29.500 7.500h8" stroke="#222"/></svg>
<svg style="left:774px;top:135px" width="34" height="50" viewBox="774 135 34 50">
<path d="M785 146h19v19h-19zM790 151v9h9v-9z" fill="#fff" fill-rule="evenodd" stroke="#000" stroke-width="1"/><path d="M785.500 164.500l18-18" stroke="#d8141c" stroke-width="1.800"/>
<rect x="776" y="137" width="19" height="19" fill="#000"/>
<path d="M782.500 170.500l4.500 1.800v6l-4.500 2.500-4.500-2.500v-6z" fill="#fff" stroke="#111" stroke-width="1.100"/><path d="M778 172.300l4.500 2 4.500-2M782.500 174.300v6.500" fill="none" stroke="#111" stroke-width="1"/><path d="M778 172.300l4.500 2v6.500l-4.500-2.500z" fill="#aaa"/>
<rect x="792.500" y="171.500" width="12" height="12" fill="#383838" stroke="#111" stroke-width=".8"/></svg>
<span class="t n" style="left:813px;top:135px;width:10px;text-align:center;font:10px/14px 'Liberation Sans',sans-serif;color:#222">C</span><div style="left:824px;top:137px;width:103px;height:8px;background:linear-gradient(90deg,#262122,#001828);border:1px solid #f0f0f0;border-top-color:#555;border-left-color:#555"></div><svg style="left:820px;top:144px" width="11" height="7"><path d="M5.500 .5l5 6h-10z" fill="#d8d4cc" stroke="#7a7a7a" stroke-width=".9"/></svg><div class="fld" style="left:932px;top:133px;width:33px;height:16px;box-shadow:inset 1px 1px 0 #9a9a9a;border-color:#cfcac0 #f4f4f4 #f4f4f4 #cfcac0"></div><span class="t n" style="left:936px;top:135px;font:10px/13px 'Liberation Sans',sans-serif;letter-spacing:-0.2px">0</span><span class="t n" style="left:967px;top:135px;font:10px/13px 'Liberation Sans',sans-serif">%</span><span class="t n" style="left:813px;top:153px;width:10px;text-align:center;font:10px/14px 'Liberation Sans',sans-serif;color:#222">M</span><div style="left:824px;top:155px;width:103px;height:8px;background:linear-gradient(90deg,#262122,#280404);border:1px solid #f0f0f0;border-top-color:#555;border-left-color:#555"></div><svg style="left:820px;top:162px" width="11" height="7"><path d="M5.500 .5l5 6h-10z" fill="#d8d4cc" stroke="#7a7a7a" stroke-width=".9"/></svg><div class="fld" style="left:932px;top:151px;width:33px;height:16px;box-shadow:inset 1px 1px 0 #9a9a9a;border-color:#cfcac0 #f4f4f4 #f4f4f4 #cfcac0"></div><span class="t n" style="left:936px;top:153px;font:10px/13px 'Liberation Sans',sans-serif;letter-spacing:-0.2px">0</span><span class="t n" style="left:967px;top:153px;font:10px/13px 'Liberation Sans',sans-serif">%</span><span class="t n" style="left:813px;top:171px;width:10px;text-align:center;font:10px/14px 'Liberation Sans',sans-serif;color:#222">Y</span><div style="left:824px;top:173px;width:103px;height:8px;background:linear-gradient(90deg,#262122,#1e1c04);border:1px solid #f0f0f0;border-top-color:#555;border-left-color:#555"></div><svg style="left:820px;top:180px" width="11" height="7"><path d="M5.500 .5l5 6h-10z" fill="#d8d4cc" stroke="#7a7a7a" stroke-width=".9"/></svg><div class="fld" style="left:932px;top:169px;width:33px;height:16px;box-shadow:inset 1px 1px 0 #9a9a9a;border-color:#cfcac0 #f4f4f4 #f4f4f4 #cfcac0"></div><span class="t n" style="left:936px;top:171px;font:10px/13px 'Liberation Sans',sans-serif;letter-spacing:-0.2px">0</span><span class="t n" style="left:967px;top:171px;font:10px/13px 'Liberation Sans',sans-serif">%</span><span class="t n" style="left:813px;top:189px;width:10px;text-align:center;font:10px/14px 'Liberation Sans',sans-serif;color:#222">K</span><div style="left:824px;top:191px;width:103px;height:8px;background:linear-gradient(90deg,#fff,#111);border:1px solid #f0f0f0;border-top-color:#555;border-left-color:#555"></div><svg style="left:921px;top:198px" width="11" height="7"><path d="M5.500 .5l5 6h-10z" fill="#d8d4cc" stroke="#7a7a7a" stroke-width=".9"/></svg><div class="fld" style="left:932px;top:187px;width:33px;height:16px;box-shadow:inset 1px 1px 0 #9a9a9a;border-color:#cfcac0 #f4f4f4 #f4f4f4 #cfcac0"></div><span class="t n" style="left:936px;top:189px;font:10px/13px 'Liberation Sans',sans-serif;letter-spacing:-0.2px">100</span><span class="t n" style="left:967px;top:189px;font:10px/13px 'Liberation Sans',sans-serif">%</span>
<div style="left:774px;top:206px;width:200px;height:17px;background:#000"></div>
<div style="left:790px;top:207px;width:168px;height:15px;background:linear-gradient(90deg,#f00,#ff0 17%,#4c4 33%,#2cf 50%,#22a 66%,#e0a 83%,#f01 100%)"></div>
<div style="left:790px;top:207px;width:168px;height:15px;background:linear-gradient(rgba(255,255,255,.75),rgba(255,255,255,0) 45%,rgba(0,0,0,0) 55%,rgba(0,0,0,.85))"></div>
<div style="left:958px;top:207px;width:15px;height:7px;background:#fff"></div>
<div style="left:958px;top:214px;width:15px;height:8px;background:#050a0a"></div>
<svg style="left:775px;top:207px" width="15" height="15"><rect width="15" height="15" fill="#fff"/><path d="M0 15L15 0" stroke="#d8141c" stroke-width="1.800"/></svg>
</div>
<!-- FRAME OVERLAY -->
<div style="left:0;top:0;width:1024px;height:738px;border:1px solid #787878;box-shadow:inset 0 0 0 1px #f4f4f4;border-radius:4px 4px 0 0;pointer-events:none"></div>
<svg style="left:0;top:0" width="1024" height="4"><path d="M0 0h4L0 4z" fill="#2c6cb4"/><path d="M1024 0h-4l4 4z" fill="#2c6cb4"/></svg>
<!-- TASKBAR -->
<div id="taskbar" style="left:0;top:738px;width:1024px;height:30px;background:#d4d0c8;box-shadow:inset 0 1px 0 #fff;border-top:1px solid #d4d0c8">
<div class="xpbtn2" style="left:2px;top:3px;width:47px;height:22px"></div>
<svg style="left:4px;top:5px" width="17" height="17" viewBox="0 0 17 17"><path d="M2.500 3.500q3-2 6 .3l-1.300 5q-3-2.300-6-.3z" fill="#e8421c"/><path d="M9.300 4.200q3 1.800 6-.2l-1.300 5q-3 2-6 .2z" fill="#5cb844"/><path d="M1 9.500q3-2 6 .3l-1.300 5q-3-2.300-6-.3z" fill="#2c68d4"/><path d="M7.700 10.200q3 1.800 6-.2l-1.300 5q-3 2-6 .2z" fill="#f4c41c"/></svg>
<span class="t" style="left:22px;top:6px;font-size:12px;font-weight:bold">开始</span>
<svg style="left:55px;top:5px" width="18" height="18" viewBox="0 0 18 18"><path d="M9 9V1.700A7.300 7.300 0 0 0 1.700 9z" fill="#ee5522"/><path d="M9 9h7.300A7.300 7.300 0 0 0 9 1.700z" fill="#5e9e2c"/><path d="M9 9v7.300A7.300 7.300 0 0 0 16.300 9z" fill="#e6c832"/><path d="M9 9H1.700A7.300 7.300 0 0 0 9 16.300z" fill="#2a62c8"/><circle cx="9" cy="9" r="3.900" fill="#fff"/><path d="M7.200 6.300v5.400l4.800-2.700z" fill="#111"/></svg>
<svg style="left:78px;top:5px" width="18" height="18" viewBox="0 0 18 18"><path d="M2.500 2.500l12-1.500 1 13.500-12.500 2z" fill="#2a78e0" stroke="#1a50b0" stroke-width=".8"/><path d="M12 4.500c-4-1.500-8 .5-8 4.500s4 5.500 8 4l-.5-2.500c-2.500 1-5 .2-5-1.800s2.500-3 5-2z" fill="#f4ecc4"/><path d="M7 6h4.500v5h-4.500z" fill="#e8f0fc"/><path d="M8 10l2.500-2.500M10.500 7.500l.2 1.800M10.500 7.500l-1.800-.1" stroke="#224" stroke-width=".9" fill="none"/><path d="M14.500 4.500l.8 1.500 1.500.3-1.200 1 .3 1.600-1.400-.8-1.400.8.300-1.600-1.200-1 1.500-.3z" fill="#e84020"/></svg>
<svg style="left:102px;top:5px" width="19" height="19" viewBox="0 0 19 19"><circle cx="9.500" cy="9.500" r="5.600" fill="none" stroke="#2a8ae8" stroke-width="3.200"/><rect x="6" y="8" width="9.500" height="2.300" fill="#2a8ae8"/><path d="M10.500 10.300h6.500v3l-4 .5z" fill="#d4d0c8"/><path d="M1.800 16.500C1 11 9 2 16.500 2.200" fill="none" stroke="#58b0f0" stroke-width="1.500"/><path d="M1.800 16.500c.3 1.500 2.500 1 4.700-.5" fill="none" stroke="#58b0f0" stroke-width="1.300"/></svg>
<span class="t n" style="left:131px;top:1px;font:bold 13px/16px 'Liberation Sans',sans-serif;letter-spacing:-1px;transform:scaleX(1.050);transform-origin:0 0">»</span>
<div style="left:144px;top:3px;width:159px;height:22px;background:repeating-conic-gradient(#fff 0 25%,#d4d0c8 0 50%) 0 0/2px 2px;border:1px solid;border-color:#404040 #fff #fff #404040;box-shadow:inset 1px 1px 0 #808080"></div>
<div style="left:148px;top:6px;width:16px;height:16px;background:linear-gradient(#e8901c,#c85c08);border:1px solid #7a3c04"></div>
<span class="t n" style="left:151px;top:8px;font:bold 10px/12px 'Liberation Sans',sans-serif;color:#ffd890;letter-spacing:-0.5px">Ai</span>
<span class="t" style="left:167px;top:7px">改锥<span class="m" style="letter-spacing:-0.6px">.ai* @ 300% (CM...</span></span>
<svg style="left:957px;top:8px" width="18" height="16" viewBox="0 0 18 16"><path d="M5 2c.5 2 1 2 1.500 .8s1 1.200 1.500 0 1 1.200 1.500 0 1 1.200 1.500 0 1 1.200 1.500 0 1 .7 1 1.700" fill="none" stroke="#000" stroke-width=".9"/><rect x="1.700" y="5.700" width="14.800" height="7.800" rx="1.500" fill="#fff" stroke="#000" stroke-width="1.400"/><path d="M3.500 8.300h11M3.500 10.500h11" stroke="#000" stroke-width="1.600" stroke-dasharray="1 .6"/></svg>
<div style="left:978px;top:3px;width:2px;height:24px;border-left:1px solid #808080;border-right:1px solid #fff"></div>
<div style="left:985px;top:3px;width:36px;height:24px;border:1px solid;border-color:#808080 #fff #fff #808080"></div>
<span class="t n" style="left:990px;top:5px;font:bold 14px/16px 'Liberation Sans',sans-serif;letter-spacing:-1.200px;transform:scaleX(1.100);transform-origin:0 0">«</span>
<svg style="left:1002px;top:6px" width="18" height="18" viewBox="0 0 18 18"><rect x="1.500" y="4" width="7" height="6.500" rx=".8" fill="#58b4f4" stroke="#2a7ad0" stroke-width=".9"/><path d="M2.500 5h5v2.500h-5z" fill="#9ad4fc"/><rect x="4" y="10.700" width="2.200" height="1.800" fill="#6a7ac8"/><ellipse cx="5.200" cy="13.700" rx="4" ry="1.800" fill="#d0d4f0" stroke="#5a68c0" stroke-width=".9"/><path d="M10.300 4.500q1.300 2 0 4M12.300 3.300q2 3.200 0 6.400M14.300 2.300q2.600 4.200 0 8.400" fill="none" stroke="#555" stroke-width=".8"/></svg>
</div>
</body></html>
